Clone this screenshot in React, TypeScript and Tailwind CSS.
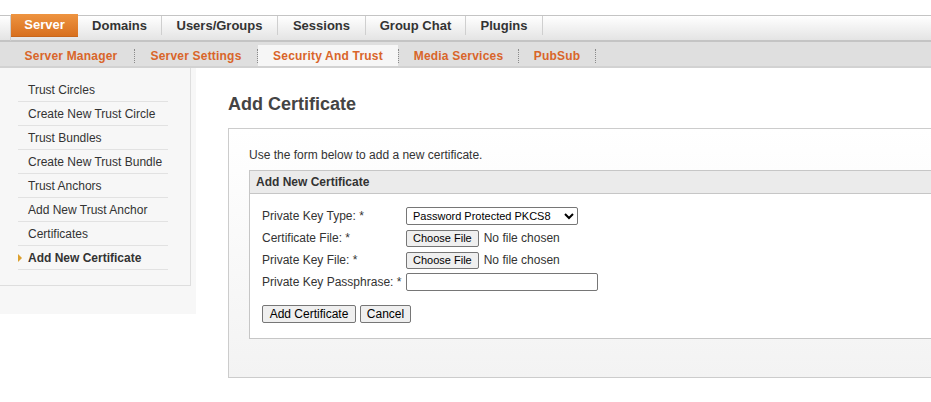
import React from 'react';

const mainTabs = [
    { label: 'Server', width: 'w-[67px]', active: true },
    { label: 'Domains', width: 'w-[84px]' },
    { label: 'Users/Groups', width: 'w-[116px]' },
    { label: 'Sessions', width: 'w-[88px]' },
    { label: 'Group Chat', width: 'w-[100px]' },
    { label: 'Plugins', width: 'w-[77px]' },
];

const subTabs = [
    { label: 'Server Manager', width: 'w-[126px]' },
    { label: 'Server Settings', width: 'w-[122px]' },
    { label: 'Security And Trust', width: 'w-[140px]', active: true },
    { label: 'Media Services', width: 'w-[119px]' },
    { label: 'PubSub', width: 'w-[76px]' },
];

const sideItems = [
    'Trust Circles',
    'Create New Trust Circle',
    'Trust Bundles',
    'Create New Trust Bundle',
    'Trust Anchors',
    'Add New Trust Anchor',
    'Certificates',
    'Add New Certificate',
];

const FakeFile: React.FC = () => (
    <div className="flex items-center">
        <button
            type="button"
            className="h-[17px] px-[6px] bg-[#efefef] border border-[#767676] rounded-[2px] text-[11px] leading-none text-black"
        >
            Choose File
        </button>
        <span className="ml-[5px] text-[12px] text-[#333]">No file chosen</span>
    </div>
);

const Row: React.FC<{ label: string; children: React.ReactNode }> = ({ label, children }) => (
    <div className="flex items-center h-[22px]">
        <div className="w-[144px] text-[12px] text-[#333]">{label}</div>
        {children}
    </div>
);

export default function App() {
    const activeSide = 'Add New Certificate';

    return (
        <div className="w-[931px] h-[402px] overflow-hidden bg-white" style={{ fontFamily: '"Liberation Sans", Arial, sans-serif' }}>
            <div className="h-[15px]" />

            {/* Main tabs */}
            <div className="h-[27px] border-t border-b-2 border-[#c4c4c4] bg-gradient-to-b from-white to-[#e4e4e4] flex items-start">
                <div className="w-[11px] h-[25px] border-r border-[#cfcfcf]" />
                {mainTabs.map(t =>
                    t.active ? (
                        <div
                            key={t.label}
                            className={`${t.width} h-[23px] -mt-[2px] bg-gradient-to-b from-[#ee9440] to-[#d8701e] text-white text-[13px] font-bold flex items-center justify-center border-b border-[#c8661c]`}
                        >
                            {t.label}
                        </div>
                    ) : (
                        <div
                            key={t.label}
                            className={`${t.width} h-[19px] border-r border-[#cfcfcf] text-[#333] text-[13px] font-bold flex items-center justify-center`}
                        >
                            {t.label}
                        </div>
                    )
                )}
            </div>

            {/* Sub tabs */}
            <div className="h-[26px] bg-[#dfdfdf] border-b-2 border-[#d2d2d2] flex items-end pl-[8px]">
                {subTabs.map(t => (
                    <div key={t.label} className="flex items-end h-full">
                        <div
                            className={`${t.width} h-[21px] flex items-center justify-center text-[12px] font-bold tracking-[0.2px] text-[#d9652a] ${t.active ? 'bg-[#f6f6f6]' : ''}`}
                        >
                            {t.label}
                        </div>
                        <div className="h-[14px] mb-[3px] border-l border-dotted border-[#8a8a8a]" />
                    </div>
                ))}
            </div>

            <div className="flex items-start">
                {/* Sidebar */}
                <div className="w-[196px] bg-[#f7f7f7] pb-[28px] shrink-0">
                    <div className="w-[191px] border-r border-b border-[#dedede] pt-[10px] pb-[15px]">
                        <ul className="ml-[18px] w-[150px]">
                            {sideItems.map(item => {
                                const active = item === activeSide;
                                return (
                                    <li
                                        key={item}
                                        className="relative h-[24px] border-b border-[#e2e2e2] pl-[10px] flex items-center text-[12px] text-[#333]"
                                    >
                                        {active && (
                                            <span className="absolute left-0 top-1/2 -translate-y-1/2 w-0 h-0 border-y-[4px] border-y-transparent border-l-[4px] border-l-[#dca02e]" />
                                        )}
                                        <span className={active ? 'font-bold' : ''}>{item}</span>
                                    </li>
                                );
                            })}
                        </ul>
                    </div>
                </div>

                {/* Main content */}
                <div className="pl-[32px] pt-[25px] shrink-0">
                    <h1 className="text-[18px] leading-[22px] font-bold text-[#444] mb-[13px]">Add Certificate</h1>

                    <div className="w-[740px] border border-[#cccccc] bg-gradient-to-b from-white to-[#f3f3f3] pl-[20px] pt-[19px] pb-[38px]">
                        <p className="text-[12px] leading-[14px] text-[#333] mb-[8px]">Use the form below to add a new certificate.</p>

                        <div className="border border-[#c6c6c6] bg-white">
                            <div className="h-[23px] bg-[#ebebeb] border-b border-[#c6c6c6] pl-[6px] flex items-center text-[12px] font-bold text-[#333]">
                                Add New Certificate
                            </div>
                            <form className="pl-[12px] pt-[11px] pb-[15px]" onSubmit={e => e.preventDefault()}>
                                <Row label="Private Key Type: *">
                                    <select
                                        defaultValue="pkcs8"
                                        className="h-[18px] w-[172px] border border-[#767676] rounded-[2px] bg-white text-[11px] text-black pl-[2px]"
                                    >
                                        <option value="pkcs8">Password Protected PKCS8</option>
                                        <option value="pem">Unprotected PEM</option>
                                    </select>
                                </Row>
                                <Row label="Certificate File: *">
                                    <FakeFile />
                                </Row>
                                <Row label="Private Key File: *">
                                    <FakeFile />
                                </Row>
                                <Row label="Private Key Passphrase: *">
                                    <input
                                        type="password"
                                        className="h-[18px] w-[192px] border border-[#767676] rounded-[2px] bg-white"
                                    />
                                </Row>
                                <div className="flex gap-[4px] mt-[12px]">
                                    <button
                                        type="submit"
                                        className="h-[18px] w-[94px] bg-[#efefef] border border-[#767676] rounded-[2px] text-[12px] leading-none text-black"
                                    >
                                        Add Certificate
                                    </button>
                                    <button
                                        type="button"
                                        className="h-[18px] w-[51px] bg-[#efefef] border border-[#767676] rounded-[2px] text-[12px] leading-none text-black"
                                    >
                                        Cancel
                                    </button>
                                </div>
                            </form>
                        </div>
                    </div>
                </div>
            </div>
        </div>
    );
}
